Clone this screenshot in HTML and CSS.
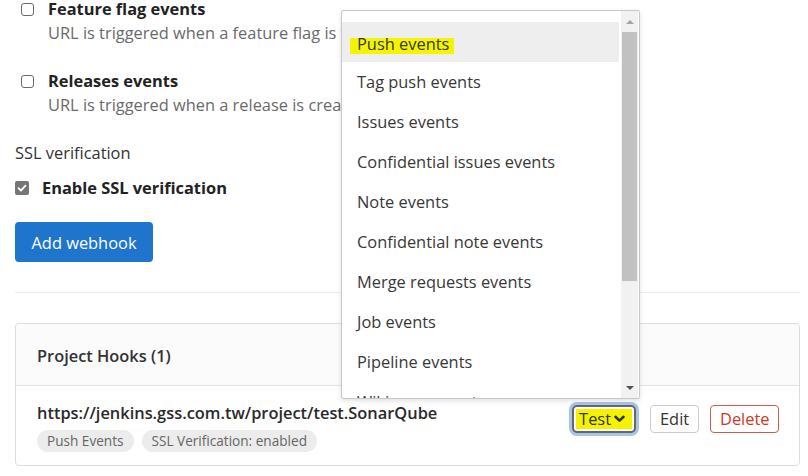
FILE: index.html
```html
<!DOCTYPE html>
<html>
<head>
<meta charset="utf-8">
<link rel="stylesheet" href="styles.css">
</head>
<body>
<div class="page">
  <div class="events">
    <div class="event">
      <div class="check-row"><span class="cb"></span><span class="label">Feature flag events</span></div>
      <div class="desc">URL is triggered when a feature flag is turned on or off</div>
    </div>
    <div class="event">
      <div class="check-row"><span class="cb"></span><span class="label">Releases events</span></div>
      <div class="desc">URL is triggered when a release is created/updated</div>
    </div>
  </div>
  <div class="ssl-title">SSL verification</div>
  <div class="check-row ssl">
    <span class="cb checked"><svg width="14" height="14" viewBox="0 0 14 14"><path d="M3.5 7.2l2.4 2.4 4.6-5" fill="none" stroke="#fff" stroke-width="1.8" stroke-linecap="round" stroke-linejoin="round"/></svg></span>
    <span class="label">Enable SSL verification</span>
  </div>
  <button class="btn-primary">Add webhook</button>
  <hr class="divider">
  <div class="card">
    <div class="card-header">Project Hooks (1)</div>
    <div class="hook-row">
      <div class="hook-info">
        <div class="hook-url">https://jenkins.gss.com.tw/project/test.SonarQube</div>
        <div class="badges">
          <span class="badge">Push Events</span>
          <span class="badge">SSL Verification: enabled</span>
        </div>
      </div>
      <div class="hook-actions">
        <button class="btn btn-test"><span class="test-inner">Test <svg class="chev" width="11" height="8" viewBox="0 0 11 8"><path d="M1.5 1.8l4 3.8 4-3.8" fill="none" stroke="#333" stroke-width="2.6" stroke-linecap="round" stroke-linejoin="round"/></svg></span></button>
        <button class="btn btn-edit">Edit</button>
        <button class="btn btn-delete">Delete</button>
      </div>
    </div>
  </div>
</div>

<div class="dropdown">
  <div class="dd-list">
    <div class="dd-item active"><span class="hl">Push events</span></div>
    <div class="dd-item">Tag push events</div>
    <div class="dd-item">Issues events</div>
    <div class="dd-item">Confidential issues events</div>
    <div class="dd-item">Note events</div>
    <div class="dd-item">Confidential note events</div>
    <div class="dd-item">Merge requests events</div>
    <div class="dd-item">Job events</div>
    <div class="dd-item">Pipeline events</div>
    <div class="dd-item">Wiki page events</div>
  </div>
  <div class="dd-scroll">
    <div class="sb-arrow up"></div>
    <div class="sb-thumb"></div>
    <div class="sb-space"></div>
    <div class="sb-arrow down"></div>
  </div>
</div>
</body>
</html>
```
FILE: styles.css
```css
body {
  margin: 0;
  font-family: "Open Sans", "Noto Sans", sans-serif;
  font-size: 16.4px;
  color: #333;
  background: #fff;
  overflow: hidden;
}
.page {
  padding: 0 8px 0 15px;
}
.events {
  margin-top: -3px;
  padding-left: 6px;
}
.event {
  margin-bottom: 24px;
}
.check-row {
  display: flex;
  align-items: center;
  height: 24px;
}
.cb {
  width: 13px;
  height: 13px;
  box-sizing: border-box;
  border: 1px solid #6b6b6b;
  border-radius: 3px;
  margin-right: 14px;
  flex: none;
}
.label {
  font-weight: 700;
  color: #222;
  line-height: 24px;
  white-space: nowrap;
}
.desc {
  padding-left: 27px;
  color: #6a6a6a;
  line-height: 24px;
  white-space: nowrap;
}
.ssl-title {
  line-height: 24px;
  color: #333;
}
.ssl {
  margin-top: 11px;
}
.cb.checked {
  width: 14px;
  height: 14px;
  border: none;
  background: #767676;
  border-radius: 2px;
  margin-right: 13px;
  display: flex;
}
.btn-primary {
  display: block;
  margin-top: 22px;
  height: 40px;
  width: 138px;
  background: #1f75cb;
  color: #fff;
  border: none;
  border-radius: 4px;
  font: inherit;
  padding: 0;
}
.divider {
  margin: 30px 0 0;
  border: 0;
  border-top: 1px solid #ececec;
}
.card {
  margin-top: 30px;
  border: 1px solid #dcdcdc;
  border-radius: 4px;
}
.card-header {
  background: #fbfbfb;
  padding: 20px 21px 17px;
  line-height: 24px;
  border-bottom: 1px solid #e3e3e3;
  font-weight: 600;
  color: #333;
  border-radius: 4px 4px 0 0;
}
.hook-row {
  display: flex;
  justify-content: space-between;
  align-items: flex-start;
  padding: 15px 20px 13px 21px;
}
.hook-url {
  line-height: 24px;
  font-weight: 600;
  color: #2a2a2a;
  white-space: nowrap;
}
.badges {
  display: flex;
  gap: 8px;
  margin-top: 5px;
}
.badge {
  height: 22px;
  line-height: 22px;
  padding: 0 10px;
  background: #ececec;
  border-radius: 11px;
  font-size: 13.6px;
  color: #666;
}
.hook-actions {
  display: flex;
  align-items: center;
  margin-top: 4px;
}
.btn {
  font: inherit;
  background: #fff;
  color: #333;
  height: 28px;
  border: 1px solid #ccc;
  border-radius: 4px;
  padding: 0 9px;
  line-height: 26px;
}
.btn-test {
  border: 2px solid #666;
  padding: 2px;
  height: 28px;
  box-shadow: 0 0 0 3px #a7c5e9;
  border-radius: 5px;
  margin-right: 14px;
  display: flex;
}
.test-inner {
  display: flex;
  align-items: center;
  background: #f5f200;
  height: 20px;
  line-height: 20px;
  padding: 0 7px 0 3px;
  gap: 3px;
}
.btn-edit {
  margin-right: 11px;
  width: 49px;
}
.btn-delete {
  border-color: #cf5a4c;
  color: #c9392a;
  width: 69px;
}

.dropdown {
  position: absolute;
  left: 341px;
  top: 10px;
  width: 299px;
  height: 389px;
  box-sizing: border-box;
  border: 1px solid #c8c8c8;
  border-radius: 2px;
  background: #fff;
  box-shadow: 0 2px 5px rgba(0, 0, 0, 0.12);
  display: flex;
  overflow: hidden;
}
.dd-list {
  flex: 1;
  padding-top: 11px;
  overflow: hidden;
  padding-right: 2px;
}
.dd-item {
  height: 40px;
  line-height: 40px;
  padding-left: 15px;
  white-space: nowrap;
  color: #383838;
}
.dd-item.active {
  background: #eeeeee;
}
.hl {
  display: inline-block;
  vertical-align: middle;
  line-height: 22px;
  padding: 0 5px 0 7px;
  margin-left: -7px;
  margin-top: 1px;
  background: linear-gradient(transparent 5px, #f4f400 5px, #f4f400 21px, transparent 21px);
}
.dd-scroll {
  width: 17px;
  margin-right: 1px;
  background: #f1f1f1;
  display: flex;
  flex-direction: column;
  align-items: center;
}
.sb-arrow {
  height: 21px;
  width: 17px;
  display: flex;
  align-items: center;
  justify-content: center;
  flex: none;
}
.sb-arrow::before {
  content: "";
  width: 0;
  height: 0;
  border-left: 4px solid transparent;
  border-right: 4px solid transparent;
}
.sb-arrow.up::before {
  border-bottom: 4px solid #a3a3a3;
}
.sb-arrow.down::before {
  border-top: 4px solid #505050;
}
.sb-thumb {
  width: 15px;
  height: 249px;
  background: #c1c1c1;
  flex: none;
}
.sb-space {
  flex: 1;
}
```
